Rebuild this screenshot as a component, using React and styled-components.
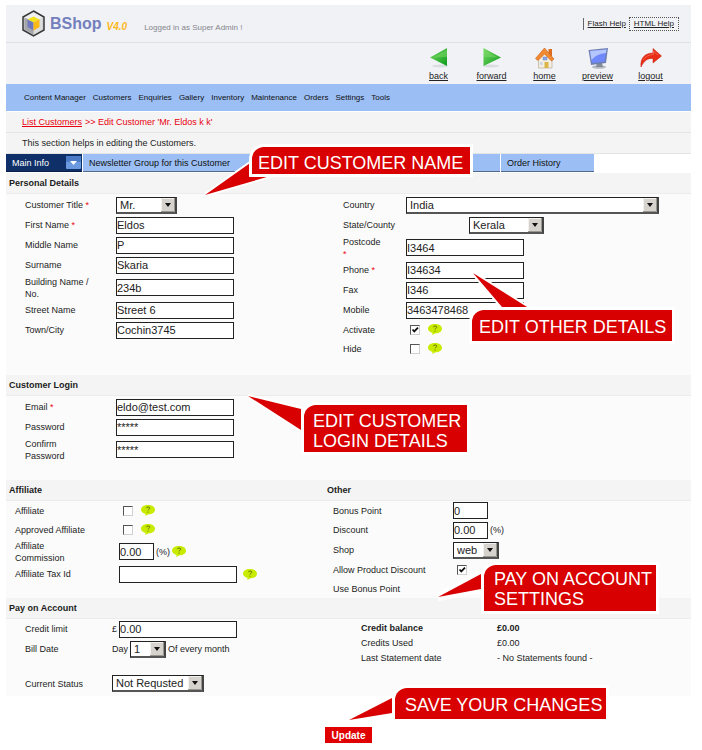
import React, { useId } from 'react';
import styled, { createGlobalStyle, css } from 'styled-components';

const GlobalStyle = createGlobalStyle`
  * { box-sizing: border-box; }
  body {
    margin: 0;
    background: #fff;
    color: #1c1c1c;
    font: 9px/12px "Liberation Sans", Arial, sans-serif;
  }
  input, select, button { font-family: inherit; }
`;

const Page = styled.main`
  position: relative;
  padding: 5px 11px 0 6px;
`;

const Header = styled.header`
  display: flex;
  align-items: center;
  height: 38px;
  padding: 0 13px 0 16px;
  background: #f1f2f6;
  border-bottom: 1px solid #dfe0e5;
`;

const Brand = styled.h1`
  margin: 0 5px;
  color: #7480bd;
  font-size: 16px;
  line-height: 20px;
`;

const Version = styled.em`
  margin: 6px 17px 0 0;
  color: #fcb81c;
  font-size: 10px;
  font-weight: bold;
`;

const Session = styled.span`
  flex: 1;
  margin-top: 8px;
  color: #85868c;
  font-size: 8px;
`;

const HelpLinks = styled.nav`
  display: flex;
  gap: 3px;
  padding-left: 3px;
  border-left: 1px solid #666;
  font-size: 8px;
`;

const HelpLink = styled.a`
  padding: 0 1px;
  color: #222;
`;

const FramedLink = styled(HelpLink)`
  padding: 0 4px;
  outline: 1px dotted #555;
  outline-offset: 0;
`;

const Toolbar = styled.nav`
  display: flex;
  justify-content: flex-end;
  height: 41px;
  padding: 4px 14px 0 0;
  background: #f1f2f6;
`;

const Tool = styled.a`
  display: flex;
  flex-direction: column;
  align-items: center;
  gap: 1px;
  width: 53px;
  color: #222;

  svg { width: 22px; height: 22px; }
`;

const MenuBar = styled.nav`
  display: flex;
  flex-wrap: wrap;
  align-items: center;
  gap: 7px;
  min-height: 27px;
  margin-bottom: 1px;
  padding: 0 18px;
  background: #9bbef4;
  font-size: 8px;
`;

const MenuLink = styled.a`
  color: #111;
  text-decoration: none;
`;

const Strip = styled.div`
  display: flex;
  align-items: center;
  gap: 3px;
  min-height: 21px;
  padding: 0 16px;
  background: #f4f4f4;
  border-bottom: 1px solid #e4e4e4;
  color: ${(p) => (p.$alert ? '#e8000f' : 'inherit')};
  a { color: inherit; }
`;

const Tabs = styled.div`
  display: grid;
  grid-template-columns: 76px minmax(0, 417px) 93px;
  gap: 1px;
  padding-bottom: 1px;
`;

const Tab = styled.button`
  display: flex;
  align-items: center;
  justify-content: space-between;
  height: 18px;
  padding: 0 1px 0 6px;
  border: 0;
  border-bottom: 1px solid #52688c;
  background: #9bbef4;
  color: #111;
  font-size: 9px;
  ${(p) => p.$active && css`
    background: #0f2f68;
    border-color: #071d48;
    color: #fff;
  `}
  svg { width: 15px; height: 13px; }
`;

const SectionTitle = styled.h2`
  display: flex;
  align-items: center;
  height: 21px;
  margin: 0;
  padding: 0 3px;
  background: #f4f4f4;
  border-bottom: 1px solid #ececec;
  font-size: 9px;
  line-height: 12px;
`;

const SectionBody = styled.div`
  display: grid;
  grid-template-columns: ${(p) => p.$columns || '1fr'};
  align-items: start;
  min-height: ${(p) => p.$min}px;
  padding-top: ${(p) => p.$top || 0}px;
  padding-left: ${(p) => p.$indent || 0}px;
  background: #fbfbfb;
`;

const Split = styled.div`
  display: grid;
  grid-template-columns: 318px 1fr;
`;

const Row = styled.div`
  display: grid;
  grid-template-columns: ${(p) => p.$label}px 1fr;
  align-items: center;
  height: ${(p) => p.$height}px;
  margin-top: ${(p) => p.$before || 0}px;
`;

const FieldLabel = styled.label`
  white-space: pre-line;
`;

const Required = styled.span`
  color: #f00010;
`;

const Controls = styled.div`
  display: flex;
  align-items: center;
  gap: ${(p) => p.$gap || 2}px;
  padding-left: ${(p) => p.$shift || 0}px;
`;

const TextInput = styled.input`
  width: ${(p) => p.$width || 118}px;
  height: 17px;
  padding: 0;
  border: 1px solid #222;
  border-radius: 0;
  background: #fff;
  color: #222;
  font-size: 11px;
`;

const SelectFrame = styled.span`
  display: inline-grid;
  grid-template-columns: 1fr 14px;
  width: ${(p) => p.$width}px;
  height: 17px;
  border: 1px solid #222;
  border-right: 2px solid #444;
  border-bottom: 2px solid #555;
  background: #fff;

  select {
    grid-area: 1 / 1 / 2 / 3;
    height: 14px;
    padding: 0 0 0 3px;
    border: 0;
    appearance: none;
    background: transparent;
    color: #222;
    font-size: 11px;
  }
  svg {
    grid-area: 1 / 2;
    width: 14px;
    height: 14px;
    pointer-events: none;
  }
`;

const CheckFrame = styled.span`
  display: inline-grid;
  width: 10px;
  height: 10px;

  input {
    grid-area: 1 / 1;
    width: 10px;
    height: 10px;
    margin: 0;
    appearance: none;
    background: #fff;
    border: 1px solid #d0d0d0;
    border-top-color: #555;
    border-left-color: #555;
  }
  svg {
    grid-area: 1 / 1;
    width: 10px;
    height: 10px;
    pointer-events: none;
  }
`;

const HelpIcon = styled.svg`
  width: 14px;
  height: 11px;
`;

const Balance = styled.dl`
  display: grid;
  grid-template-columns: 136px 1fr;
  row-gap: 3px;
  margin: 3px 0 0;
  dd { margin: 0; }
`;

const Total = styled.strong`
  font-weight: bold;
`;

const Actions = styled.div`
  display: flex;
  justify-content: center;
  padding: 31px 0 7px;
`;

const UpdateButton = styled.button`
  height: 16px;
  padding: 0 7px;
  border: 0;
  background: #e00000;
  color: #fff;
  font-size: 10px;
  font-weight: bold;
`;

const CalloutBox = styled.div`
  position: absolute;
  left: ${(p) => p.$x}px;
  top: ${(p) => p.$y}px;
  padding: ${(p) => p.$pad};
  border-radius: 12px 0 0 0;
  background: #d80000;
  box-shadow: 0 0 0 3px #fff;
  color: #fff;
  font-size: 18px;
  line-height: 20px;
  white-space: pre;
`;

const CalloutTail = styled.svg`
  position: absolute;
  left: ${(p) => p.$x}px;
  top: ${(p) => p.$y}px;
  overflow: visible;
  pointer-events: none;
`;

function Callout({ x, y, pad, tailX, tailY, tailW, tailH, points, halo = 4, children }) {
  return (
    <>
      <CalloutTail $x={tailX} $y={tailY} width={tailW} height={tailH} aria-hidden="true">
        <polygon points={points} fill="#fff" stroke="#fff" strokeWidth={halo} />
        <polygon points={points} fill="#d80000" />
      </CalloutTail>
      <CalloutBox $x={x} $y={y} $pad={pad}>{children}</CalloutBox>
    </>
  );
}

function Help() {
  return (
    <HelpIcon viewBox="0 0 14 11" role="img" aria-label="Help">
      <path d="M7 0C3 0 0 2 0 4.7c0 2 1.9 3.6 4.6 4.2L4.2 11l3.4-1.7C11.400 9.200 14 7.300 14 4.700 14 2 11 0 7 0Z" fill="#c9eb00" />
      <path d="M5.300 3.200Q5.600 2 7.100 2q1.700 0 1.700 1.200c0 1-1.700 1-1.700 2.200M7 6.600v1.100" fill="none" stroke="#647800" />
    </HelpIcon>
  );
}

function Field({ label, required, labelWidth, height = 20, before, shift, gap, render }) {
  const id = useId();
  return (
    <Row $label={labelWidth} $height={height} $before={before}>
      <FieldLabel htmlFor={id}>
        {label}{required && <Required>{required === 'below' ? '\n*' : ' *'}</Required>}
      </FieldLabel>
      <Controls $shift={shift} $gap={gap}>{render(id)}</Controls>
    </Row>
  );
}

function TextField({ value, width, after, ...rest }) {
  return (
    <Field {...rest} render={(id) => (
      <>
        <TextInput id={id} type="text" defaultValue={value} $width={width} />
        {after}
      </>
    )} />
  );
}

function Select({ id, value, width }) {
  return (
    <SelectFrame $width={width}>
      <select id={id} defaultValue={value}><option>{value}</option></select>
      <svg viewBox="0 0 14 14" aria-hidden="true">
        <path d="M0 0H14V14H0Z" fill="#d6d3ce" />
        <path d="M0.500 14V0.500H13" fill="none" stroke="#f3f2ef" />
        <path d="M13.500 0V13.500H0" fill="none" stroke="#99968f" />
        <path d="M4 5H10L7 9Z" fill="#111" />
      </svg>
    </SelectFrame>
  );
}

function SelectField({ value, width, ...rest }) {
  return <Field {...rest} render={(id) => <Select id={id} value={value} width={width} />} />;
}

function CheckField({ checked, help, ...rest }) {
  return (
    <Field height={19} shift={4} gap={8} {...rest} render={(id) => (
      <>
        <CheckFrame>
          <input id={id} type="checkbox" defaultChecked={checked} />
          {checked && (
            <svg viewBox="0 0 10 10" aria-hidden="true">
              <path d="M2.500 4.500L4.300 6.500L8 2.700" fill="none" stroke="#111" strokeWidth="1.800" />
            </svg>
          )}
        </CheckFrame>
        {help && <Help />}
      </>
    )} />
  );
}

function Logo() {
  return (
    <svg width="23" height="27" viewBox="0 0 23 27" aria-hidden="true">
      <path d="M11.500 1L22 7V20L11.500 26L1 20V7Z" fill="#c9cacc" stroke="#383838" strokeWidth="1.500" />
      <path d="M11.500 2.500L20.500 7.500V19.500L11.500 24.500Z" fill="#dcdcde" />
      <path d="M11.500 2.500L20.500 7.500L11.500 12L2.500 7.500Z" fill="#f0f0f0" />
      <path d="M2.500 8V19.500L11.500 24.500V20L6 17V9Z" fill="#a5a6aa" />
      <path d="M5.500 9.500L11.500 6.500L17.500 9.500L11.500 12.500Z" fill="#f2e21c" />
      <path d="M5.500 9.500L11.500 12.500V20.500L5.500 17Z" fill="#6e79bd" />
      <path d="M17.500 9.500L11.500 12.500V20.500L17.500 17Z" fill="#fdb813" />
    </svg>
  );
}

const icons = {
  back: (
    <svg viewBox="0 0 22 22">
      <defs><linearGradient id="green" x1="0" y1="0" x2="1" y2="1"><stop stopColor="#7bdc63" /><stop offset="1" stopColor="#0d9a1d" /></linearGradient></defs>
      <ellipse cx="12" cy="19" rx="8" ry="1.500" fill="#d9dde0" />
      <path d="M2 10.500L19 1V19Z" fill="url(#green)" />
      <path d="M5 10.500L19 3V10Z" fill="#7cd96a" opacity=".5" />
    </svg>
  ),
  forward: (
    <svg viewBox="0 0 22 22">
      <ellipse cx="10" cy="19" rx="8" ry="1.500" fill="#d9dde0" />
      <path d="M20 10.500L2.500 1V19Z" fill="url(#green)" />
      <path d="M17 10.500L3 3V10Z" fill="#7cd96a" opacity=".5" />
    </svg>
  ),
  home: (
    <svg viewBox="0 0 22 22">
      <path d="M14.500 2H18V9H14.500Z" fill="#dc6c20" />
      <path d="M4.500 10L11 4L18 11V21H4.500Z" fill="#f5efe2" stroke="#b9ae9a" strokeWidth=".7" />
      <path d="M1.500 11.500L10.500 1L20 12L17.500 14L10.500 7L4 13.500Z" fill="#f28a32" stroke="#c65c16" strokeWidth=".6" />
      <path d="M9 10H13V13H9Z" fill="#87a6ec" stroke="#7786b5" strokeWidth=".5" />
      <path d="M10.500 15H14.500V21H10.500Z" fill="#d9b548" />
      <path d="M6 15H8.500V18H6Z" fill="#c9d5e6" />
    </svg>
  ),
  preview: (
    <svg viewBox="0 0 22 22">
      <ellipse cx="12" cy="20" rx="7" ry="1.800" fill="#b5b9c2" />
      <path d="M10 16H15L16 20H9Z" fill="#858b98" />
      <path d="M1.500 3L21 1L19 16L4 18Z" fill="#6e7fb3" />
      <path d="M3 4L19.500 2.500L17.500 14.500L5 16Z" fill="#6f88fb" />
      <path d="M3 4L19.500 2.500L19 6Q9 7 4.500 13Z" fill="#b5c6ff" />
    </svg>
  ),
  logout: (
    <svg viewBox="0 0 22 22">
      <path d="M1 20C0 11 5 6 13 6V1.500L21.500 9L13 16V11.500C7 11 4 14 1 20Z" fill="#e82e17" stroke="#c81b0c" strokeWidth=".5" />
      <path d="M3 13Q7 7.500 13.500 7.500V4L18 8" fill="none" stroke="#f8604a" />
    </svg>
  ),
};

const menu = ['Content Manager', 'Customers', 'Enquiries', 'Gallery', 'Inventory', 'Maintenance', 'Orders', 'Settings', 'Tools'];

export default function App() {
  return (
    <Page>
      <GlobalStyle />
      <Header>
        <Logo />
        <Brand>BShop</Brand>
        <Version>V4.0</Version>
        <Session>Logged in as Super Admin !</Session>
        <HelpLinks>
          <HelpLink href="#flash">Flash Help</HelpLink>
          <FramedLink href="#html">HTML Help</FramedLink>
        </HelpLinks>
      </Header>
      <Toolbar>
        {Object.entries(icons).map(([name, icon]) => (
          <Tool key={name} href={`#${name}`}>{icon}{name}</Tool>
        ))}
      </Toolbar>
      <MenuBar>
        {menu.map((item) => <MenuLink key={item} href="#menu">{item}</MenuLink>)}
      </MenuBar>
      <Strip $alert><a href="#customers">List Customers</a> &gt;&gt; Edit Customer 'Mr. Eldos k k'</Strip>
      <Strip>This section helps in editing the Customers.</Strip>
      <Tabs>
        <Tab type="button" $active>
          Main Info
          <svg viewBox="0 0 15 13" aria-hidden="true">
            <rect width="15" height="13" rx="1" fill="#6b9ae0" />
            <path d="M0 0H15V6H0Z" fill="#4b7bc7" />
            <path d="M4 5H11L7.500 9Z" fill="#fff" />
          </svg>
        </Tab>
        <Tab type="button">Newsletter Group for this Customer</Tab>
        <Tab type="button">Order History</Tab>
      </Tabs>

      <form onSubmit={(e) => e.preventDefault()}>
        <SectionTitle>Personal Details</SectionTitle>
        <SectionBody $columns="318px 1fr" $indent={19} $min={181} $top={1}>
          <div>
            <SelectField label="Customer Title" required labelWidth={91} value="Mr." width={61} />
            <TextField label="First Name" required labelWidth={91} value="Eldos" />
            <TextField label="Middle Name" labelWidth={91} value="P" />
            <TextField label="Surname" labelWidth={91} value="Skaria" />
            <TextField label={'Building Name /\nNo.'} height={25} labelWidth={91} value="234b" />
            <TextField label="Street Name" labelWidth={91} value="Street 6" />
            <TextField label="Town/City" labelWidth={91} value="Cochin3745" />
          </div>
          <div>
            <SelectField label="Country" labelWidth={63} value="India" width={253} />
            <SelectField label="State/County" labelWidth={63} shift={63} value="Kerala" width={75} />
            <TextField label="Postcode" required="below" height={25} labelWidth={63} value="I3464" />
            <TextField label="Phone" required labelWidth={63} value="I34634" />
            <TextField label="Fax" labelWidth={63} value="I346" />
            <TextField label="Mobile" labelWidth={63} value="3463478468" />
            <CheckField label="Activate" labelWidth={63} checked help />
            <CheckField label="Hide" labelWidth={63} help />
          </div>
        </SectionBody>

        <SectionTitle>Customer Login</SectionTitle>
        <SectionBody $indent={19} $min={84} $top={1}>
          <div>
            <TextField label="Email" required labelWidth={91} value="eldo@test.com" />
            <TextField label="Password" labelWidth={91} value="*****" />
            <TextField label={'Confirm\nPassword'} height={25} labelWidth={91} value="*****" />
          </div>
        </SectionBody>

        <Split>
          <section>
            <SectionTitle>Affiliate</SectionTitle>
            <SectionBody $indent={9} $min={97}>
              <div>
                <CheckField label="Affiliate" labelWidth={104} help />
                <CheckField label="Approved Affiliate" labelWidth={104} help />
                <TextField label={'Affiliate\nCommission'} height={25} labelWidth={104} value="0.00" width={35} after={<>(%) <Help /></>} />
                <TextField label="Affiliate Tax Id" labelWidth={104} gap={6} value="" after={<Help />} />
              </div>
            </SectionBody>
          </section>
          <section>
            <SectionTitle>Other</SectionTitle>
            <SectionBody $indent={9} $min={97}>
              <div>
                <TextField label="Bonus Point" height={19} labelWidth={120} value="0" width={35} />
                <TextField label="Discount" labelWidth={120} value="0.00" width={35} after="(%)" />
                <SelectField label="Shop" labelWidth={120} value="web" width={46} />
                <CheckField label="Allow Product Discount" labelWidth={120} checked />
                <CheckField label="Use Bonus Point" labelWidth={120} />
              </div>
            </SectionBody>
          </section>
        </Split>

        <SectionTitle>Pay on Account</SectionTitle>
        <SectionBody $columns="336px 1fr" $indent={19} $min={77}>
          <div>
            <Field label="Credit limit" labelWidth={87} render={(id) => <>£ <TextInput id={id} defaultValue="0.00" /></>} />
            <Field label="Bill Date" labelWidth={87} render={(id) => <>Day <Select id={id} value="1" width={36} /> Of every month</>} />
            <SelectField label="Current Status" height={25} before={12} labelWidth={87} value="Not Requsted" width={92} />
          </div>
          <Balance>
            <dt><Total>Credit balance</Total></dt><dd><Total>£0.00</Total></dd>
            <dt>Credits Used</dt><dd>£0.00</dd>
            <dt>Last Statement date</dt><dd>- No Statements found -</dd>
          </Balance>
        </SectionBody>
        <Actions><UpdateButton type="submit">Update</UpdateButton></Actions>
      </form>

      <Callout x={252} y={147} pad="6px 7px 1px 6px" tailX={205} tailY={160} tailW={72} tailH={35} points="0,35 48,1 72,14">EDIT CUSTOMER NAME</Callout>
      <Callout x={472} y={310} pad="7px 6px 4px 7px" tailX={473} tailY={273} tailW={56} tailH={34} points="0,0 54,34 29,34">EDIT OTHER DETAILS</Callout>
      <Callout x={304} y={405} pad="6px 6px 1px 9px" tailX={248} tailY={396} tailW={53} tailH={34} points="0,0 53,13 53,34">{'EDIT CUSTOMER\nLOGIN DETAILS'}</Callout>
      <Callout x={484} y={565} pad="4px 4px 2px 10px" tailX={438} tailY={574} tailW={43} tailH={23} halo={8} points="0,23 43,0 43,15">{'PAY ON ACCOUNT\nSETTINGS'}</Callout>
      <Callout x={395} y={688} pad="7px 4px 4px 10px" tailX={349} tailY={698} tailW={43} tailH={22} points="0,22 43,0 43,15">SAVE YOUR CHANGES</Callout>
    </Page>
  );
}
